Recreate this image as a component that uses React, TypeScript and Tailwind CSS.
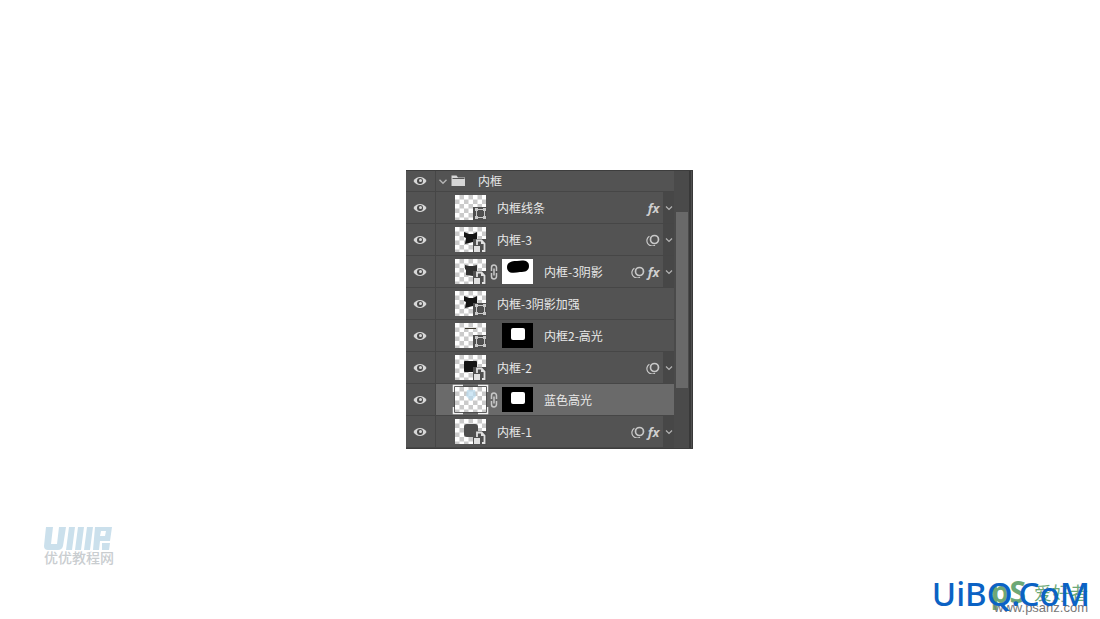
import type { ReactNode } from "react"

type Layer = {
  name: string
  thumb: "blank" | "cat" | "catSoft" | "line" | "square" | "grey" | "blue"
  badge?: "shape" | "smart"
  linked?: boolean
  mask?: "blob" | "window"
  filter?: boolean
  fx?: boolean
  selected?: boolean
}

const layers: Layer[] = [
  { name: "内框线条", thumb: "blank", badge: "shape", fx: true },
  { name: "内框-3", thumb: "cat", badge: "smart", filter: true },
  { name: "内框-3阴影", thumb: "catSoft", badge: "smart", linked: true, mask: "blob", filter: true, fx: true },
  { name: "内框-3阴影加强", thumb: "cat", badge: "shape" },
  { name: "内框2-高光", thumb: "line", badge: "shape", mask: "window" },
  { name: "内框-2", thumb: "square", badge: "smart", filter: true },
  { name: "蓝色高光", thumb: "blue", linked: true, mask: "window", selected: true },
  { name: "内框-1", thumb: "grey", badge: "smart", filter: true, fx: true },
]

const artwork: Record<Layer["thumb"], ReactNode> = {
  blank: null,
  cat: <path d="M9 5l5 2h4l4-2v11l-4-1-8 2 1-6-2-1z" fill="#151515" />,
  catSoft: <path d="M10 6l4 1h4l4-1v10l-4 1-7-1v-5l-1-1z" fill="#303030" />,
  line: <path d="M10 5.500h11" stroke="#3b372c" strokeWidth="1" />,
  square: <rect x="9" y="6" width="13" height="11" rx="1" fill="#161616" />,
  grey: <rect x="9" y="5" width="14" height="13" rx="3" fill="#4d4d4d" />,
  blue: <path d="M12 3h8l1 6-5 5-5-5z" fill="#b9dcf0" opacity="0.7" />,
}

function EyeIcon() {
  return (
    <svg width="14" height="10" viewBox="0 0 14 10" aria-hidden="true">
      <path d="M.5 5C3.2-.2 10.8-.2 13.5 5 10.800 10.200 3.200 10.200.5 5z" fill="#d8d8d8" />
      <circle cx="7" cy="5" r="3" fill="#4a4a4a" />
      <circle cx="7.500" cy="4.500" r="1.500" fill="#d8d8d8" />
    </svg>
  )
}

function Chevron({ wide }: { wide?: boolean }) {
  return (
    <svg
      width={wide ? 10 : 8}
      height={wide ? 7 : 6}
      viewBox="0 0 8 6"
      fill="none"
      stroke="#b4b4b4"
      strokeWidth="1.200"
      aria-hidden="true"
    >
      <path d="M1 1.500l3 3 3-3" />
    </svg>
  )
}

function FolderIcon() {
  return (
    <svg width="15" height="12" viewBox="0 0 15 12" aria-hidden="true">
      <path d="M.5 11V.5h5l1.500 2h7V11z" fill="#d6d6d6" />
      <path d="M1.500 3.500h12" stroke="#555" strokeWidth="1" />
    </svg>
  )
}

function LinkIcon() {
  return (
    <svg width="8" height="16" viewBox="0 0 8 16" fill="none" stroke="#c8c8c8" strokeWidth="1.500" aria-hidden="true">
      <path d="M1.500 7V3.500a2.500 2.500 0 0 1 5 0V7M1.500 9v3.500a2.500 2.500 0 0 0 5 0V9M4 4.500v7" />
    </svg>
  )
}

function FilterIcon() {
  return (
    <svg width="14" height="12" viewBox="0 0 14 12" fill="none" stroke="#c8c8c8" aria-hidden="true">
      <circle cx="8.500" cy="5.500" r="4" strokeWidth="1.700" />
      <path d="M3.400 2.200a4.500 4.500 0 1 0 5.600 9" strokeWidth="1.200" />
    </svg>
  )
}

function Thumb({ layer }: { layer: Layer }) {
  return (
    <svg width="37" height="31" viewBox="-3 -3 37 31" className="-mx-[3px] shrink-0" aria-hidden="true">
      {layer.selected && (
        <>
          <path
            d="M-1.500 5V-1.500H8M23 -1.500H32.500V5M32.500 20V26.500H23M8 26.500H-1.500V20"
            fill="none"
            stroke="#f2f2f2"
            strokeWidth="1.500"
          />
          <rect x="-.5" y="-.5" width="32" height="26" fill="#333" />
        </>
      )}
      <rect width="31" height="25" fill="url(#checker)" />
      {artwork[layer.thumb]}
      {layer.badge && <path d="M18 12h14v14H18z" fill="#4f4f4f" />}
      {layer.badge === "shape" && (
        <g fill="none" stroke="#c8c8c8">
          <path d="M21.500 14v9M29.500 14v9M21 14.500h9M21 22.500h9" strokeWidth="1" />
          <path d="M20 13h3v3h-3zM28 13h3v3h-3zM20 21h3v3h-3zM28 21h3v3h-3z" fill="#c8c8c8" stroke="none" />
        </g>
      )}
      {layer.badge === "smart" && (
        <g>
          <path d="M22 18v-4.500h4.500l3 3V24H27" fill="none" stroke="#e0e0e0" strokeWidth="1.800" />
          <path d="M26 13l4 4h-4z" fill="#e0e0e0" />
          <path d="M19 19h6v6h-6z" fill="#e0e0e0" />
        </g>
      )}
    </svg>
  )
}

function Mask({ kind }: { kind: "blob" | "window" }) {
  return (
    <svg width="31" height="25" viewBox="0 0 31 25" className="shrink-0" aria-hidden="true">
      <rect width="31" height="25" fill={kind === "blob" ? "#fff" : "#000"} />
      {kind === "blob" ? (
        <path d="M5 8c0-5 5-6 10-6 6-1 12-1 12 5 0 5-4 6-9 6-6 1-13 2-13-5z" />
      ) : (
        <rect x="9" y="5" width="14" height="12" rx="2" fill="#fff" />
      )}
    </svg>
  )
}

function LayerRow({ layer }: { layer: Layer }) {
  const expandable = layer.filter || layer.fx
  return (
    <li className="flex h-8 border-b border-[#464646]">
      <button
        aria-label={`显示 ${layer.name}`}
        className="flex w-[30px] items-center justify-center border-r border-[#464646] pr-px"
      >
        <EyeIcon />
      </button>
      <div className={`flex min-w-0 flex-1 items-center pl-[19px] ${layer.selected ? "bg-[#6a6a6a]" : ""}`}>
        <Thumb layer={layer} />
        {layer.mask && (
          <>
            <span className="flex w-4 justify-center">{layer.linked && <LinkIcon />}</span>
            <Mask kind={layer.mask} />
          </>
        )}
        <span className="flex-1 pl-[11px] whitespace-nowrap">{layer.name}</span>
        <span className="flex items-center gap-0.5 pr-[3px]">
          {layer.filter && <FilterIcon />}
          {layer.fx && (
            <span className="w-[13px] text-center font-['Open_Sans'] text-[13px] leading-4 font-bold text-[#cfcfcf] italic">
              fx
            </span>
          )}
        </span>
        {expandable && (
          <button
            aria-label={`展开 ${layer.name}`}
            className="flex w-[11px] items-center justify-center self-stretch bg-[#474747]"
          >
            <Chevron />
          </button>
        )}
      </div>
    </li>
  )
}

export default function App() {
  return (
    <main className="relative flex min-h-screen items-center justify-center overflow-hidden bg-white pr-px">
      <svg width="0" height="0" className="absolute" aria-hidden="true">
        <defs>
          <pattern id="checker" width="9" height="9" patternUnits="userSpaceOnUse">
            <rect width="9" height="9" fill="#fff" />
            <path d="M4.500 0H9v4.500H4.500zM0 4.500h4.500V9H0z" fill="#cacaca" />
          </pattern>
        </defs>
      </svg>

      <section className="flex w-[287px] border-t border-b border-[#3d3d3d] bg-[#535353] font-['Noto_Sans_CJK_SC',sans-serif] text-xs leading-4 text-[#e8e8e8]">
        <ul className="min-w-0 flex-1">
          <li className="flex h-[21px] border-b border-[#464646]">
            <button
              aria-label="显示 内框"
              className="flex w-[30px] items-center justify-center border-r border-[#464646] pr-px"
            >
              <EyeIcon />
            </button>
            <div className="flex flex-1 items-center pl-0.5">
              <button aria-label="展开 内框" className="mr-[3px] flex w-2.5 justify-center">
                <Chevron wide />
              </button>
              <FolderIcon />
              <span className="pl-3">内框</span>
            </div>
          </li>
          {layers.map((layer) => (
            <LayerRow key={layer.name} layer={layer} />
          ))}
        </ul>
        <div className="w-[15px] bg-[#4a4a4a] pt-[41px] pr-px pl-0.5">
          <div className="h-44 bg-[#696969]" />
        </div>
        <div className="w-1 border-r border-l-2 border-[#383838] bg-[#505050]" />
      </section>

      <div className="absolute bottom-14 left-11 flex flex-col font-['Noto_Sans_CJK_SC',sans-serif]">
        <svg width="68" height="24" viewBox="0 0 68 24" fill="#cbe0ec" aria-hidden="true">
          <path d="M2 0h7L7 17h6L15 0h7l-3 19q-1 4-5 4H4q-4 0-4-4zM25 0h6l-3 23h-6zM34 0h6l-3 23h-6zM43 0h6l-3 23h-6zM51 0h17l-2 14H56l-1 9h-6zM57 4l-1 5h5l1-5zM58 16h8l-1 7h-7z" fillRule="evenodd" />
        </svg>
        <span className="text-sm leading-3 font-medium text-[#c9cdd0]">优优教程网</span>
      </div>

      <div className="absolute right-3 bottom-[3px] flex flex-col items-end">
        <div className="-mb-2 flex items-center gap-2 text-[#6da876]">
          <span className="font-['Open_Sans'] text-3xl leading-8 font-bold">pS</span>
          <span className="font-['Noto_Sans_CJK_SC',sans-serif] text-lg leading-8">爱好者</span>
        </div>
        <span className="font-['Liberation_Sans'] text-[13px] leading-4 text-[#777]">www.psahz.com</span>
      </div>
      <span className="absolute right-2.5 bottom-[5px] font-['Noto_Sans'] text-[33px] leading-10 font-medium text-[#0b62c4]">
        UiBQ.CoM
      </span>
    </main>
  )
}
